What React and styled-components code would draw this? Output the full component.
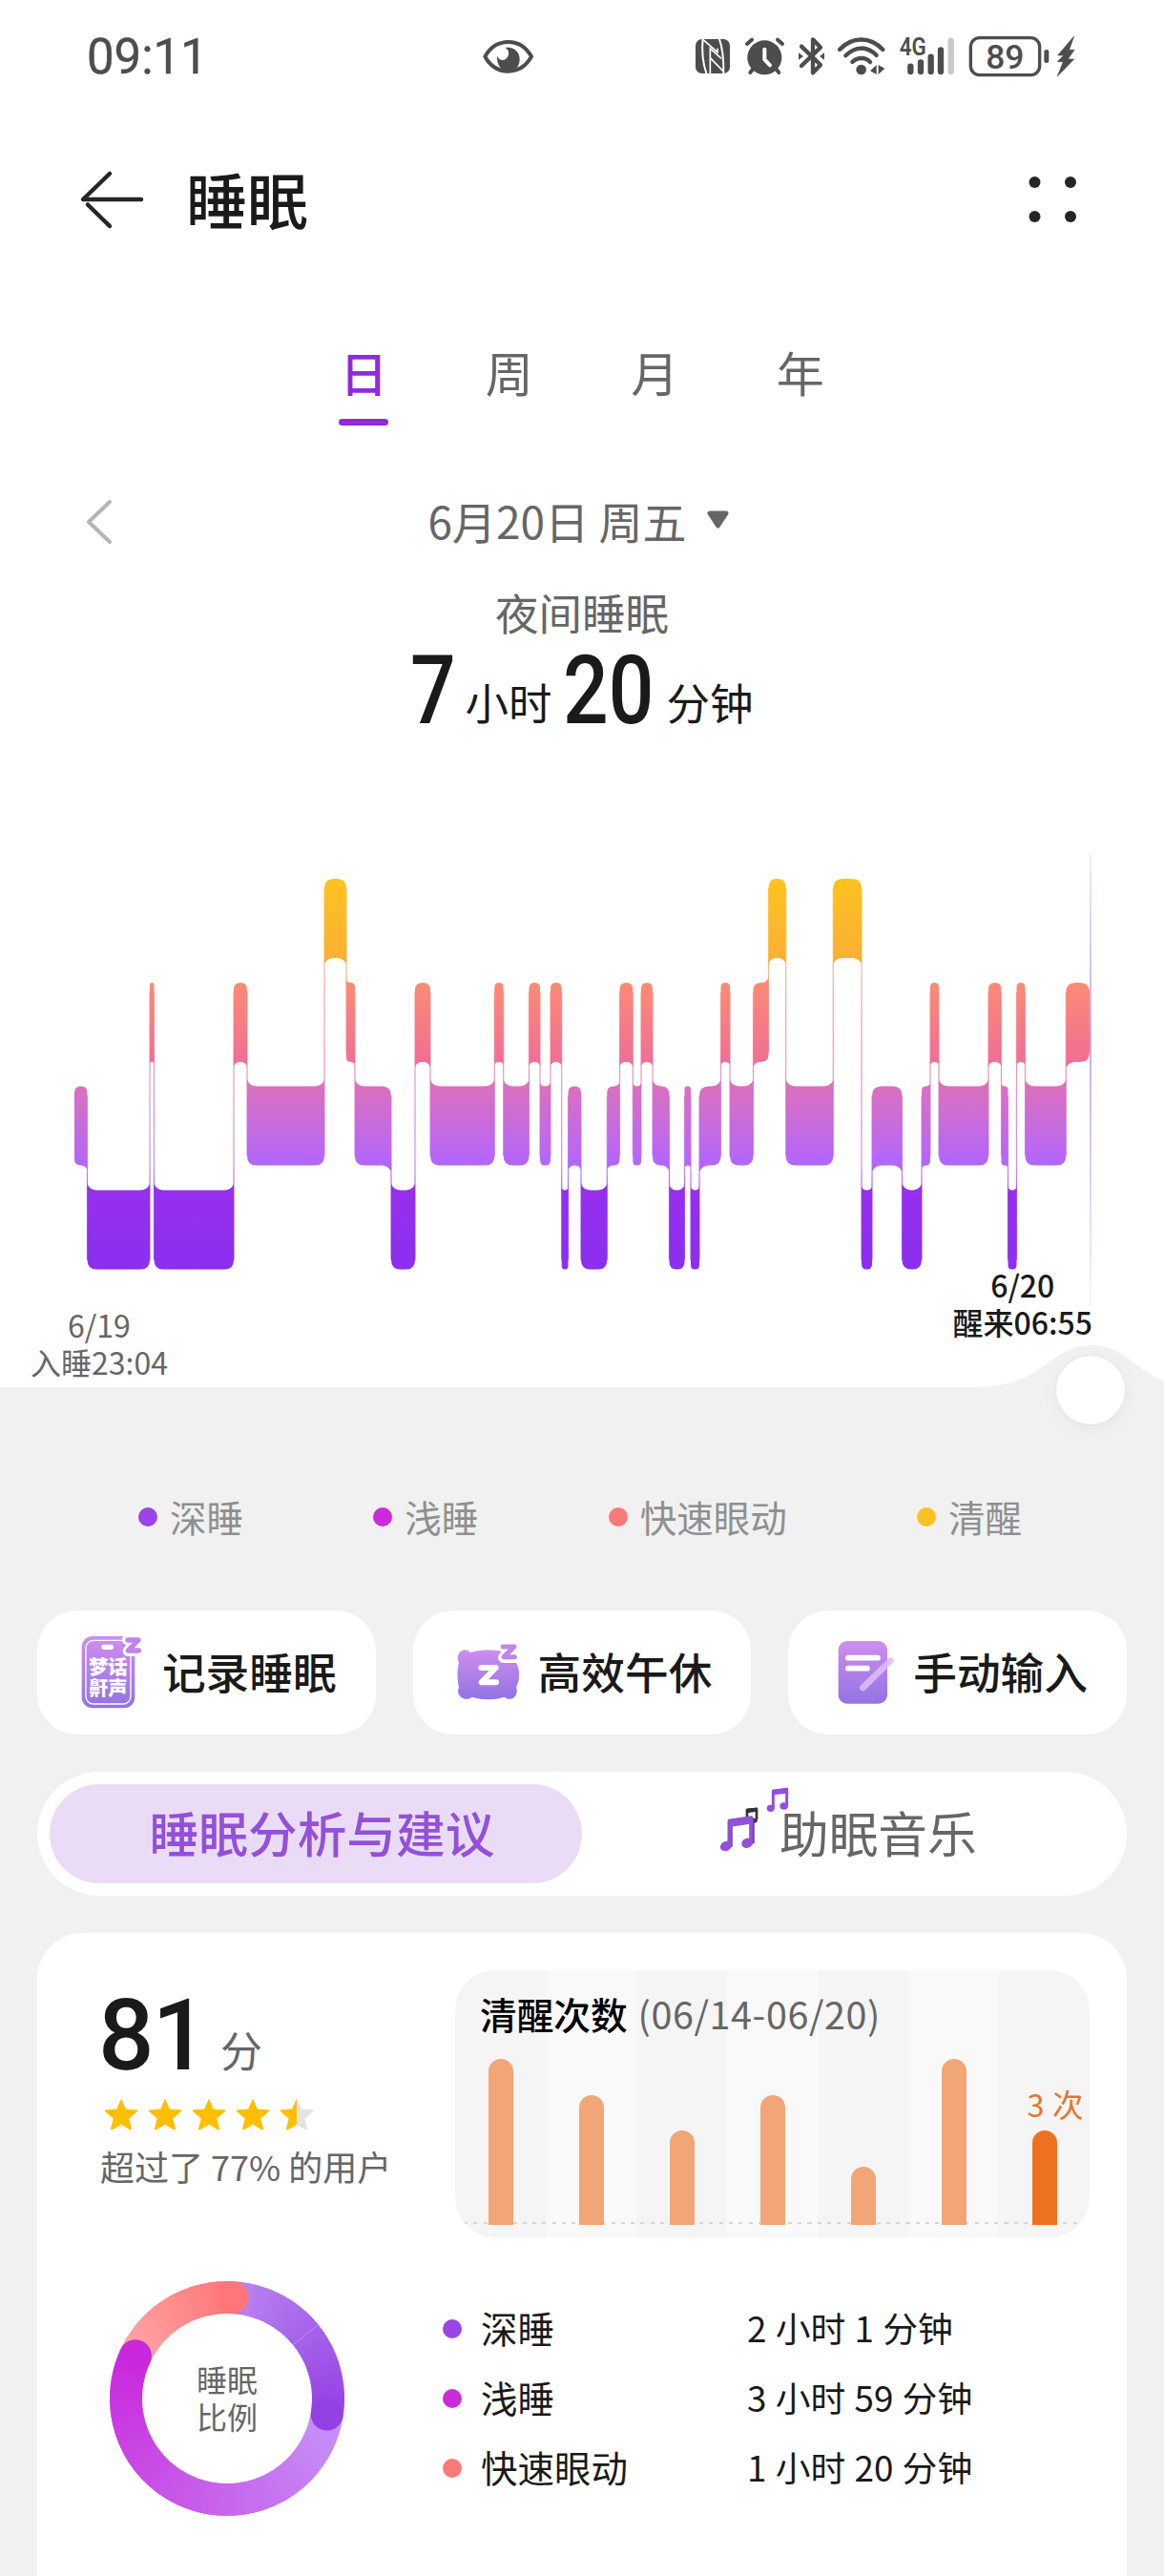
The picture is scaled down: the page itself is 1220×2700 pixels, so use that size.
import React from "react";
import styled, { createGlobalStyle } from "styled-components";

const CJK = '"Noto Sans CJK SC", "Noto Sans", sans-serif';
const DIGITS = 'Roboto, "Noto Sans CJK SC", sans-serif';

const GlobalStyle = createGlobalStyle`
  html, body { margin: 0; padding: 0; background: #f1f1f1; }
  * { box-sizing: border-box; }
`;

const Page = styled.div`
  width: 1220px;
  height: 2700px;
  overflow: hidden;
  display: flex;
  flex-direction: column;
  background: #f1f1f1;
  font-family: ${CJK};
  color: #1a1a1a;
`;

const TopPanel = styled.section`
  display: flex;
  flex-direction: column;
  flex: none;
  height: 1454px;
  background: #fff;
`;

/* ---------- status bar ---------- */
const StatusBar = styled.div`
  display: grid;
  grid-template-columns: 414px auto 1fr;
  align-items: center;
  height: 120px;
  padding: 0 90px 0 91px;
`;
const Clock = styled.div`
  font: 400 51px/60px ${DIGITS};
  color: #4d4d4d;
  letter-spacing: -0.1px;
  -webkit-text-stroke: 0.4px #4d4d4d;
`;
const StatusIcons = styled.div`
  display: flex;
  justify-content: flex-end;
`;

const INK = "#4d4d4d";

function StatusGlyph({ from, to, children }) {
  return (
    <svg width={(to - from) / 3} height="60" viewBox={`${from} 30 ${to - from} 180`}>
      {children}
    </svg>
  );
}

function EyeIcon() {
  return (
    <svg width="56" height="44" viewBox="76 52 168 132">
      <path d="M86 116 C104 84 130 70 159 70 C188 70 214 84 232 116 C214 148 188 162 159 162 C130 162 104 148 86 116Z" fill="none" stroke={INK} strokeWidth="12" strokeLinejoin="round" />
      <path d="M148 88 C176 82 195 101 195 124 C195 144 185 160 160 164 C136 160 122 142 124 112 C128 130 150 132 158 116 C164 100 158 92 148 88Z" fill={INK} />
    </svg>
  );
}

function StatusIconSet() {
  return (
    <StatusIcons>
      <StatusGlyph from={75} to={219}>
        <rect x="87" y="63" width="108" height="108" rx="20" fill={INK} />
        <g fill="none" stroke="#fff" strokeWidth="5">
          <path d="M110 60 C106 100 110 140 122 174" strokeWidth="6" />
          <path d="M161 60 C172 90 176 130 175 174" strokeWidth="6" />
          <path d="M110 64 L156 104 V92" />
          <path d="M133 174 V92 L168 124 M133 122 L174 164" />
        </g>
      </StatusGlyph>
      <StatusGlyph from={219} to={387}>
        <circle cx="304" cy="121" r="54" fill={INK} />
        <g fill="none" stroke={INK} strokeWidth="12" strokeLinecap="round">
          <path d="M249 78 L264 65 M360 78 L345 65 M268 157 L259 168 M340 157 L349 168" />
        </g>
        <path d="M304 95 V127 L321 145" fill="none" stroke="#fff" strokeWidth="12" strokeLinecap="round" strokeLinejoin="round" />
      </StatusGlyph>
      <StatusGlyph from={387} to={513}>
        <path d="M420 86 L480 144 L456 169 V64 L480 89 L420 147" fill="none" stroke={INK} strokeWidth="13" strokeLinejoin="round" strokeLinecap="round" />
        <path d="M411 106 L426 117 L411 128Z M492 106 L477 117 L492 128Z" fill={INK} />
      </StatusGlyph>
      <StatusGlyph from={513} to={705}>
        <g fill="none" stroke={INK} strokeWidth="13" strokeLinecap="round">
          <path d="M540 96 C580 54 636 54 676 96" />
          <path d="M559 115 C590 84 626 84 656 114" />
          <path d="M580 135 C596 119 622 119 636 135" />
        </g>
        <circle cx="608" cy="159" r="16" fill={INK} />
        <path d="M656 144 V174 L636 163Z M662 144 V174 L682 155Z" fill={INK} />
      </StatusGlyph>
      <StatusGlyph from={705} to={924}>
        <text x="728" y="115" fontSize="76" fontFamily="Roboto, sans-serif" fontWeight="600" fill={INK} textLength="84" lengthAdjust="spacingAndGlyphs">4G</text>
        <g fill="none" stroke={INK} strokeWidth="19" strokeLinecap="round">
          <path d="M763 149 V165 M795 136 V165 M827 119 V165 M858 97 V165" />
          <path d="M890 68 V165" stroke="#c9c9c9" />
        </g>
      </StatusGlyph>
      <StatusGlyph from={924} to={1212}>
        <rect x="952" y="59" width="217" height="117" rx="28" fill="none" stroke={INK} strokeWidth="10" />
        <rect x="1183" y="96" width="15" height="42" rx="7" fill={INK} />
        <text x="1060" y="157" textAnchor="middle" fontSize="106" fontFamily="Roboto, sans-serif" fontWeight="500" fill={INK}>89</text>
      </StatusGlyph>
      <StatusGlyph from={1212} to={1290}>
        <path d="M1277 54 L1226 114 H1244 L1225 134 H1243 L1225 180 L1277 126 H1258 L1278 97 H1262Z" fill={INK} stroke={INK} strokeWidth="2" strokeLinejoin="round" />
      </StatusGlyph>
    </StatusIcons>
  );
}

/* ---------- title bar ---------- */
const TitleBar = styled.header`
  display: flex;
  align-items: center;
  height: 180px;
  padding: 0 90px 0 82px;
`;
const Title = styled.h1`
  flex: 1;
  margin: -7px 0 0 43px;
  font: 500 64px/80px ${CJK};
`;

/* ---------- period tabs ---------- */
const Tabs = styled.nav`
  display: flex;
  justify-content: center;
  gap: 100.5px;
  height: 146px;
  padding-top: 59px;
`;
const Tab = styled.div`
  display: flex;
  flex-direction: column;
  align-items: center;
  width: 52px;
  font: ${(p) => (p.$active ? 500 : 400)} 50px/60px ${CJK};
  color: ${(p) => (p.$active ? "#9329d8" : "#666")};
  &::after {
    content: "";
    width: 52px;
    height: 7px;
    margin-top: 20px;
    border-radius: 4px;
    background: ${(p) => (p.$active ? "#9329d8" : "transparent")};
  }
`;

/* ---------- date and total ---------- */
const DateRow = styled.div`
  display: grid;
  grid-template-columns: 1fr auto 1fr;
  align-items: center;
  height: 60px;
  margin-top: 70px;
  padding: 0 90px 0 88px;
`;
const DateText = styled.div`
  display: flex;
  align-items: center;
  gap: 21px;
  margin: -2px 0 0 -4px;
  font: 400 46px/60px ${CJK};
  color: #666;
`;
const Caption = styled.div`
  margin-top: 35px;
  text-align: center;
  font: 400 45.5px/60px ${CJK};
  color: #666;
`;
const Duration = styled.div`
  display: flex;
  justify-content: center;
  align-items: baseline;
  height: 120px;
  margin: -7px 0 98px;
  line-height: 120px;
`;
const BigNumber = styled.span`
  width: ${(p) => p.$width}px;
  font: 500 101px/120px ${DIGITS};
  white-space: nowrap;
  transform: scaleX(0.83);
  transform-origin: left;
`;
const Unit = styled.span`
  position: relative;
  top: -3px;
  margin: 0 ${(p) => p.$after || 0}px 0 ${(p) => p.$before}px;
  font: 400 45.5px/60px ${CJK};
`;

/* ---------- hypnogram ---------- */
const LEVELS = {
  A: [921, 1004],
  R: [1030, 1113],
  L: [1138.5, 1221.5],
  D: [1247.5, 1330.5],
};
const ORDER = "ARLD";
const START = 78;
const STAGES = [
  ["L", 91.5], ["D", 157], ["R", 161.5], ["D", 245], ["R", 259], ["L", 340],
  ["A", 363], ["R", 372], ["L", 410], ["D", 435], ["R", 451], ["L", 518.3],
  ["R", 527.7], ["L", 554.5], ["R", 566], ["L", 577], ["R", 588.7], ["D", 595.5],
  ["L", 609], ["D", 636.3], ["L", 649.5], ["R", 663.3], ["L", 672], ["R", 684],
  ["L", 701.5], ["D", 717.5], ["L", 724], ["D", 733], ["L", 755.5], ["R", 765],
  ["L", 789.5], ["R", 805.5], ["A", 823.7], ["L", 873.3], ["A", 903], ["D", 914],
  ["L", 945.5], ["D", 966], ["L", 975], ["R", 984], ["L", 1036], ["R", 1049.5],
  ["L", 1056.5], ["D", 1065.5], ["R", 1074.5], ["L", 1117.3], ["R", 1142],
];

function stagePath(level, x0, x1, prev, next) {
  const [t, b] = LEVELS[level];
  const r = Math.min(10, (x1 - x0) / 2);
  const f = Math.min(6.5, r * 0.65);
  const idx = ORDER.indexOf(level);
  const rel = (n) => (n ? Math.sign(ORDER.indexOf(n) - idx) : 0);
  const l = rel(prev);
  const n = rel(next);
  const tl = l < 0 ? t - f : t + r;
  const tr = n < 0 ? t - f : t + r;
  const bl = l > 0 ? b + f : b - r;
  const br = n > 0 ? b + f : b - r;
  return `M${x0} ${tl} Q${x0 + (l < 0 ? r * 0.3 : 0)} ${t} ${x0 + r} ${t} L${x1 - r} ${t} Q${x1 - (n < 0 ? r * 0.3 : 0)} ${t} ${x1} ${tr} L${x1} ${br} Q${x1 - (n > 0 ? r * 0.3 : 0)} ${b} ${x1 - r} ${b} L${x0 + r} ${b} Q${x0 + (l > 0 ? r * 0.3 : 0)} ${b} ${x0} ${bl}Z`;
}

const ChartSvg = styled.svg`
  display: block;
  flex: none;
  overflow: visible;
`;

function Hypnogram() {
  const segments = STAGES.map(([level, end], i) => ({
    level,
    x0: i ? STAGES[i - 1][1] : START,
    x1: end,
    prev: i ? STAGES[i - 1][0] : null,
    next: i < STAGES.length - 1 ? STAGES[i + 1][0] : null,
  }));
  return (
    <ChartSvg width="1220" height="450" viewBox="0 882 1220 450">
      <defs>
        <linearGradient id="stage" gradientUnits="userSpaceOnUse" x1="0" y1="921" x2="0" y2="1331">
          <stop offset="0" stopColor="#fec31f" />
          <stop offset="0.2" stopColor="#fbb034" />
          <stop offset="0.268" stopColor="#fb8b74" />
          <stop offset="0.468" stopColor="#f06f95" />
          <stop offset="0.53" stopColor="#dc70bd" />
          <stop offset="0.733" stopColor="#b266ff" />
          <stop offset="0.79" stopColor="#972fee" />
          <stop offset="1" stopColor="#8b2fee" />
        </linearGradient>
        <linearGradient id="cursor" x1="0" y1="0" x2="0" y2="1">
          <stop offset="0" stopColor="#9a6be8" stopOpacity="0.12" />
          <stop offset="0.4" stopColor="#a57be0" stopOpacity="0.65" />
          <stop offset="1" stopColor="#9a6be8" stopOpacity="0.04" />
        </linearGradient>
      </defs>
      {segments.map((s, i) => (
        <path key={i} d={stagePath(s.level, s.x0, s.x1, s.prev, s.next)} fill="url(#stage)" />
      ))}
      {segments.slice(0, -1).map((s, i) => {
        const a = LEVELS[s.level];
        const b = LEVELS[s.next];
        const top = Math.min(a[0], b[0]) + 10;
        const bottom = Math.max(a[1], b[1]) - 10;
        return <rect key={i} x={s.x1 - 0.6} y={top} width="1.2" height={bottom - top} fill="url(#stage)" opacity="0.75" />;
      })}
      <rect x="1142" y="895" width="2" height="482" fill="url(#cursor)" />
    </ChartSvg>
  );
}

const TimeRow = styled.div`
  position: relative;
  display: flex;
  justify-content: space-between;
  flex: none;
  height: 122px;
  padding: 0 75px 0 32px;
`;
const TimeLabel = styled.div`
  z-index: 1;
  margin-top: ${(p) => (p.$strong ? -5 : 37)}px;
  text-align: center;
  white-space: nowrap;
  font: ${(p) => (p.$strong ? 500 : 400)} 32px/39px ${CJK};
  color: ${(p) => (p.$strong ? "#1a1a1a" : "#666")};
`;
const Wave = styled.svg`
  position: absolute;
  right: 0;
  top: 70px;
`;
const Handle = styled.div`
  position: absolute;
  left: 1107px;
  top: 89px;
  width: 72px;
  height: 72px;
  border-radius: 50%;
  background: #fff;
  box-shadow: 0 4px 20px rgba(0, 0, 0, 0.05), 0 0 2px rgba(0, 0, 0, 0.08);
`;

/* ---------- legend ---------- */
const STAGE_COLORS = { deep: "#9a45e6", light: "#ca2cdc", rem: "#fd7878", awake: "#fdc122" };

const Dot = styled.span`
  flex: none;
  width: 20px;
  height: 20px;
  border-radius: 50%;
  background: ${(p) => STAGE_COLORS[p.$kind]};
`;
const Legend = styled.div`
  display: flex;
  flex: none;
  gap: 136.3px;
  height: 234px;
  padding: 106px 0 0 145px;
`;
const LegendItem = styled.div`
  display: flex;
  align-items: center;
  gap: 13px;
  height: 60px;
  font: 400 38.5px/60px ${CJK};
  color: #8f8f8f;
  span + span { margin-top: -2px; }
`;

/* ---------- actions ---------- */
const Actions = styled.div`
  display: grid;
  grid-template-columns: repeat(3, 1fr);
  gap: 39px;
  flex: none;
  height: 130px;
  margin: 0 39px;
`;
const Action = styled.div`
  display: flex;
  align-items: center;
  justify-content: space-between;
  padding: 0 41px 0 46px;
  border-radius: 42px;
  background: #fff;
  font: 500 45.7px/60px ${CJK};
  span { margin-top: -5px; }
`;

function LilacGradient({ id }) {
  return (
    <linearGradient id={id} x1="0" y1="0" x2="0" y2="1">
      <stop offset="0" stopColor="#cf8eee" />
      <stop offset="1" stopColor="#9273e3" />
    </linearGradient>
  );
}

function RecordIcon() {
  return (
    <svg width="66" height="78" viewBox="46 72 198 234">
      <defs><LilacGradient id="rec" /></defs>
      <rect x="48" y="75" width="167" height="226" rx="34" fill="url(#rec)" />
      <rect x="61" y="88" width="141" height="200" rx="24" fill="none" stroke="#fff" strokeWidth="4" />
      <rect x="110" y="101" width="38" height="16" rx="8" fill="#fff" />
      <path d="M192 86 H228 L194 121 H228" fill="none" stroke="#fff" strokeWidth="34" strokeLinejoin="round" strokeLinecap="round" />
      <path d="M193 87 H226 L194 120 H227" fill="none" stroke="#c184ea" strokeWidth="16" strokeLinejoin="round" strokeLinecap="round" />
      <g fontFamily={CJK} fontWeight="900" fontSize="61" fill="#fff" textAnchor="middle">
        <text x="131" y="195">梦话</text>
        <text x="131" y="261">鼾声</text>
      </g>
    </svg>
  );
}
function PillowIcon() {
  return (
    <svg width="66" height="66" viewBox="1229 90 198 198">
      <defs><LilacGradient id="pil" /></defs>
      <path d="M1271 126 C1305 116 1350 116 1386 126 C1400 110 1424 130 1414 156 C1428 180 1428 210 1415 236 C1426 262 1398 284 1379 266 C1348 276 1306 276 1276 266 C1256 284 1222 262 1235 236 C1229 210 1229 180 1235 158 C1220 130 1252 104 1271 126Z" fill="url(#pil)" />
      <path d="M1374 108 H1410 L1375 142 H1412" fill="none" stroke="#fff" strokeWidth="34" strokeLinejoin="round" strokeLinecap="round" />
      <path d="M1374 108 H1409 L1376 140 H1410" fill="none" stroke="#c184ea" strokeWidth="15" strokeLinejoin="round" strokeLinecap="round" />
      <path d="M1305 174 H1351 L1306 220 H1352" fill="none" stroke="#fff" strokeWidth="18" strokeLinejoin="round" strokeLinecap="round" />
    </svg>
  );
}
const NoteSvg = styled.svg`
  margin-left: 6px;
`;
function NoteIcon() {
  return (
    <NoteSvg width="60" height="66" viewBox="415 90 180 198">
      <defs><LilacGradient id="note" /></defs>
      <rect x="417" y="90" width="154" height="197" rx="28" fill="url(#note)" />
      <path d="M448 143 H541 M448 176 H508" stroke="#fff" strokeWidth="17" strokeLinecap="round" />
      <path d="M494 237 L581 152" stroke="#dcbcfa" strokeOpacity="0.88" strokeWidth="20" strokeLinecap="round" />
    </NoteSvg>
  );
}

/* ---------- segmented control ---------- */
const Segmented = styled.div`
  display: grid;
  grid-template-columns: 558px 1fr;
  flex: none;
  height: 130px;
  margin: 39px 39px 0;
  padding: 13px;
  border-radius: 65px;
  background: #fff;
`;
const Segment = styled.div`
  display: flex;
  align-items: center;
  justify-content: ${(p) => (p.$active ? "center" : "flex-start")};
  padding-left: ${(p) => (p.$active ? 13 : 143)}px;
  border-radius: 52px;
  background: ${(p) => (p.$active ? "#eadcf6" : "transparent")};
  color: ${(p) => (p.$active ? "#9350d8" : "#666")};
  font: ${(p) => (p.$active ? 500 : 400)} 51.7px/80px ${CJK};
  span { margin-top: -4px; }
`;

const MusicSvg = styled.svg`
  flex: none;
  margin: -30px -11px 0 1px;
`;
function MusicIcon() {
  return (
    <MusicSvg width="74" height="70" viewBox="40 546 222 210">
      <g fill="none" strokeLinejoin="round">
        <path d="M127 650 V621 L157 618 V652" stroke="#333" strokeWidth="8" />
        <path d="M126 624 L159 620" stroke="#333" strokeWidth="13" />
        <ellipse cx="150" cy="655" rx="9" ry="7" fill="#333" />
        <path d="M73 735 V659 L142 649 V725" stroke="#48306b" strokeWidth="10" transform="translate(3 2)" />
        <path d="M72 735 V657 L140 647 V725" stroke="#934fd8" strokeWidth="13" />
        <path d="M69 663 L145 652" stroke="#934fd8" strokeWidth="24" />
        <path d="M209 617 V562 L252 556 V608" stroke="#934fd8" strokeWidth="9" />
        <path d="M206 566 L256 561" stroke="#934fd8" strokeWidth="16" />
      </g>
      <g fill="#934fd8">
        <ellipse cx="61" cy="735" rx="19" ry="15" transform="rotate(-25 61 735)" />
        <ellipse cx="128" cy="725" rx="19" ry="15" transform="rotate(-25 128 725)" />
        <ellipse cx="201" cy="616" rx="12" ry="11" />
        <ellipse cx="243" cy="609" rx="13" ry="11" />
      </g>
    </MusicSvg>
  );
}

/* ---------- analysis card ---------- */
const Card = styled.section`
  display: grid;
  grid-template-columns: 372px 665px;
  grid-template-rows: 280px auto;
  column-gap: 0;
  align-content: start;
  flex: none;
  height: 760px;
  margin: 39px 39px 0;
  padding: 39px 39px 0 66px;
  border-radius: 48px;
  background: #fff;
`;
const Score = styled.div`
  display: flex;
  align-items: baseline;
  height: 128px;
  gap: 15px;
  margin: 5px 0 0 -2px;
  strong { font: 500 103px/128px ${DIGITS}; letter-spacing: -2px; }
  span { position: relative; top: -2px; font: 400 44px/60px ${CJK}; color: #666; }
`;
const Stars = styled.div`
  display: flex;
  gap: 10px;
  height: 36px;
  margin: 0 0 0 4px;
`;
const Rank = styled.div`
  margin-top: 11px;
  font: 400 36px/50px ${CJK};
  color: #666;
  white-space: nowrap;
`;

const STAR = "M18 1.5 L22.8 12.4 L34.6 13.5 Q36 13.8 35 15 L26.3 22.5 L29 33 Q29 35 27 34.2 L18 28.7 L9 34.2 Q7 35 7 33 L9.7 22.5 L1 15 Q0 13.8 1.4 13.5 L13.2 12.4Z";
function Star({ half }) {
  return (
    <svg width="36" height="36" viewBox="0 0 36 36">
      <defs><clipPath id="left"><rect width="18" height="36" /></clipPath></defs>
      <path d={STAR} fill={half ? "#e3e3e3" : "#ffbf00"} />
      {half && <path d={STAR} fill="#ffbf00" clipPath="url(#left)" />}
    </svg>
  );
}

const WakePanel = styled.div`
  position: relative;
  display: grid;
  grid-template-columns: repeat(7, 1fr);
  height: 280px;
  overflow: hidden;
  border-radius: 42px;
`;
const WakeTitle = styled.div`
  position: absolute;
  left: 26px;
  top: 17px;
  white-space: pre;
  font: 500 38.7px/56px ${CJK};
  color: #000;
  span { margin-left: 2px; font-weight: 400; font-size: 39.5px; letter-spacing: 0.6px; color: #666; }
`;
const Day = styled.div`
  display: flex;
  flex-direction: column;
  align-items: center;
  justify-content: flex-end;
  padding-bottom: 13px;
  background: ${(p) => (p.$odd ? "#f9f9f9" : "#f5f5f5")};
`;
const Bar = styled.div`
  z-index: 1;
  width: 26px;
  height: ${(p) => 24 + p.$count * 37.4}px;
  border-radius: 13px 13px 0 0;
  background: ${(p) => (p.$today ? "#ee711f" : "#f2a576")};
`;
const BarLabel = styled.div`
  margin: 0 -4px 8px 19px;
  white-space: nowrap;
  font: 400 32.5px/40px ${CJK};
  color: #e6762b;
  word-spacing: 1px;
`;
const Baseline = styled.div`
  position: absolute;
  left: 9px;
  right: 9px;
  bottom: 14px;
  height: 2px;
  background: repeating-linear-gradient(90deg, #d6d6d6 0 4px, transparent 4px 10.3px);
`;

const RatioCell = styled.div`
  display: grid;
  place-items: center;
  width: 246px;
  height: 246px;
  margin: 46px 0 0 10px;
  > * { grid-area: 1 / 1; }
`;
const RatioText = styled.div`
  margin-top: -3px;
  text-align: center;
  font: 400 32px/39px ${CJK};
  color: #666;
`;

const DEG = Math.PI / 180;
const point = (deg, r) => [123 + r * Math.sin(deg * DEG), 123 - r * Math.cos(deg * DEG)];
const mix = (a, b, t) => `rgb(${a.map((v, i) => Math.round(v + (b[i] - v) * t)).join(",")})`;
const ARCS = [
  { from: 0, to: 99, a: [187, 134, 240], b: [148, 65, 228] },
  { from: 99, to: 295, a: [197, 146, 248], b: [202, 40, 220] },
  { from: 295, to: 363, a: [255, 166, 164], b: [255, 118, 120] },
];

function Donut() {
  const slices = ARCS.flatMap((arc) => {
    const n = Math.round((arc.to - arc.from) / 2);
    const step = (arc.to - arc.from) / n;
    return Array.from({ length: n }, (_, i) => {
      const [x0, y0] = point(arc.from + i * step, 106);
      const [x1, y1] = point(arc.from + (i + 1) * step + (i < n - 1 ? 0.6 : 0), 106);
      return { d: `M${x0} ${y0} A106 106 0 0 1 ${x1} ${y1}`, color: mix(arc.a, arc.b, i / (n - 1)) };
    });
  });
  const [lx0, ly0] = point(51, 90);
  const [lx1, ly1] = point(51, 122);
  return (
    <svg width="246" height="246" viewBox="0 0 246 246">
      {slices.map((s, i) => <path key={i} d={s.d} fill="none" stroke={s.color} strokeWidth="34" />)}
      {ARCS.map((arc, i) => {
        const [cx, cy] = point(arc.to, 106);
        return <circle key={i} cx={cx} cy={cy} r="17" fill={mix(arc.a, arc.b, 1)} />;
      })}
      <path d={`M${lx0} ${ly0} L${lx1} ${ly1}`} stroke="#fff" strokeOpacity="0.4" strokeWidth="0.8" />
    </svg>
  );
}

const StageList = styled.div`
  display: flex;
  flex-direction: column;
  margin: 59px 0 0 -13px;
`;
const StageRow = styled.div`
  display: grid;
  grid-template-columns: 20px 259px auto;
  column-gap: 20px;
  align-items: center;
  height: 73px;
  font: 400 38.5px/60px ${CJK};
  div { margin: -4px 0 0; }
  div + div { font-size: 36.8px; word-spacing: 1px; }
`;

const WAKE_COUNTS = [4, 3, 2, 3, 1, 4, 2];
const STAGE_ROWS = [
  ["deep", "深睡", "2 小时 1 分钟"],
  ["light", "浅睡", "3 小时 59 分钟"],
  ["rem", "快速眼动", "1 小时 20 分钟"],
];

export default function App() {
  return (
    <Page>
      <GlobalStyle />
      <TopPanel>
        <StatusBar>
          <Clock>09:11</Clock>
          <EyeIcon />
          <StatusIconSet />
        </StatusBar>
        <TitleBar>
          <svg width="70" height="64" viewBox="0 0 70 64" fill="none" stroke="#262626" strokeWidth="4.5" strokeLinecap="round" strokeLinejoin="round">
            <path d="M33 4 L5 31 H66 M10 36.5 L33 59" />
          </svg>
          <Title>睡眠</Title>
          <svg width="52" height="50" viewBox="0 0 52 50" fill="#262626">
            <circle cx="6.5" cy="6" r="6" /><circle cx="44" cy="6" r="6" />
            <circle cx="6.5" cy="42" r="6" /><circle cx="44" cy="42" r="6" />
          </svg>
        </TitleBar>
        <Tabs>
          <Tab $active>日</Tab>
          <Tab>周</Tab>
          <Tab>月</Tab>
          <Tab>年</Tab>
        </Tabs>
        <DateRow>
          <svg width="32" height="50" viewBox="0 0 32 50" fill="none" stroke="#b5b5b5" strokeWidth="4" strokeLinecap="round" strokeLinejoin="round">
            <path d="M27 5 L5 26 L27 47" />
          </svg>
          <DateText>
            6月20日 周五
            <svg width="25" height="20" viewBox="0 0 25 20">
              <path d="M4 3 H21 L12.5 16Z" fill="#666" stroke="#666" strokeWidth="5" strokeLinejoin="round" />
            </svg>
          </DateText>
        </DateRow>
        <Caption>夜间睡眠</Caption>
        <Duration>
          <BigNumber $width={47}>7</BigNumber>
          <Unit $before={10} $after={11}>小时</Unit>
          <BigNumber $width={95}>20</BigNumber>
          <Unit $before={14}>分钟</Unit>
        </Duration>
        <Hypnogram />
        <TimeRow>
          <Wave width="200" height="52" viewBox="1020 1402 200 52">
            <path d="M1020 1454 C1098 1454 1098 1410 1143 1410 C1180 1410 1192 1439 1220 1447 V1455 H1020Z" fill="#f1f1f1" />
          </Wave>
          <TimeLabel>6/19<br />入睡23:04</TimeLabel>
          <TimeLabel $strong>6/20<br />醒来06:55</TimeLabel>
          <Handle />
        </TimeRow>
      </TopPanel>

      <Legend>
        <LegendItem><Dot $kind="deep" /><span>深睡</span></LegendItem>
        <LegendItem><Dot $kind="light" /><span>浅睡</span></LegendItem>
        <LegendItem><Dot $kind="rem" /><span>快速眼动</span></LegendItem>
        <LegendItem><Dot $kind="awake" /><span>清醒</span></LegendItem>
      </Legend>

      <Actions>
        <Action><RecordIcon /><span>记录睡眠</span></Action>
        <Action><PillowIcon /><span>高效午休</span></Action>
        <Action><NoteIcon /><span>手动输入</span></Action>
      </Actions>

      <Segmented>
        <Segment $active><span>睡眠分析与建议</span></Segment>
        <Segment><MusicIcon /><span>助眠音乐</span></Segment>
      </Segmented>

      <Card>
        <div>
          <Score><strong>81</strong><span>分</span></Score>
          <Stars><Star /><Star /><Star /><Star /><Star half /></Stars>
          <Rank>超过了 77% 的用户</Rank>
        </div>
        <WakePanel>
          {WAKE_COUNTS.map((count, i) => (
            <Day key={i} $odd={i % 2 === 1}>
              {i === 6 && <BarLabel>3 次</BarLabel>}
              <Bar $count={count} $today={i === 6} />
            </Day>
          ))}
          <Baseline />
          <WakeTitle>清醒次数 <span>(06/14-06/20)</span></WakeTitle>
        </WakePanel>
        <RatioCell>
          <Donut />
          <RatioText>睡眠<br />比例</RatioText>
        </RatioCell>
        <StageList>
          {STAGE_ROWS.map(([kind, name, value]) => (
            <StageRow key={kind}>
              <Dot $kind={kind} />
              <div>{name}</div>
              <div>{value}</div>
            </StageRow>
          ))}
        </StageList>
      </Card>
    </Page>
  );
}
